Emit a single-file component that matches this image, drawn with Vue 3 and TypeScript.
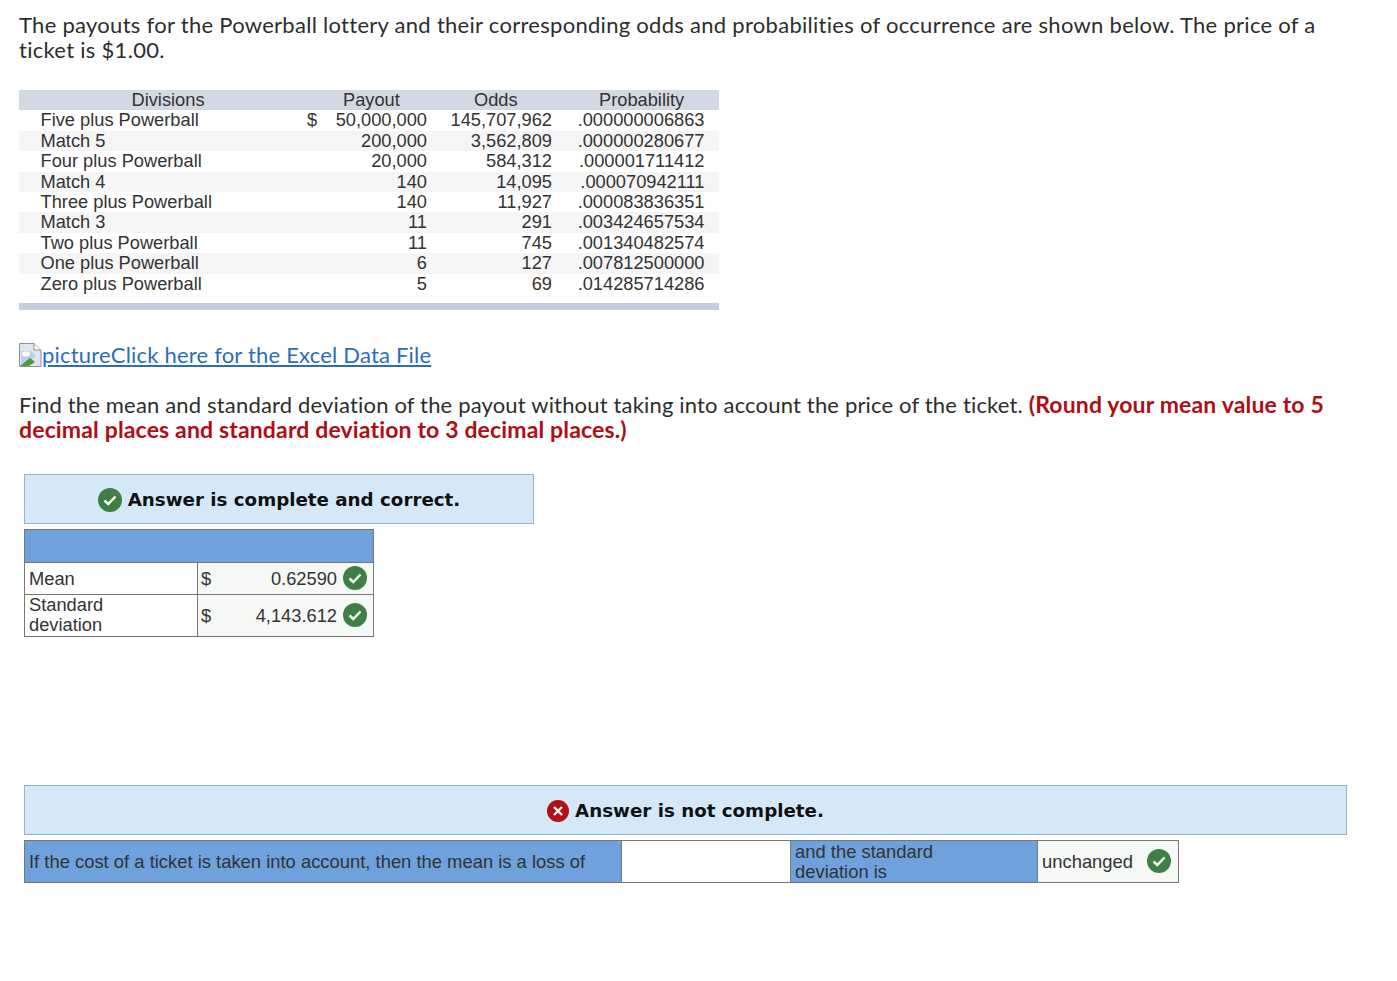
<script setup lang="ts">
interface Row { name: string; dollar?: string; payout: string; odds: string; prob: string }
const rows: Row[] = [
  { name: 'Five plus Powerball', dollar: '$', payout: '50,000,000', odds: '145,707,962', prob: '.000000006863' },
  { name: 'Match 5', payout: '200,000', odds: '3,562,809', prob: '.000000280677' },
  { name: 'Four plus Powerball', payout: '20,000', odds: '584,312', prob: '.000001711412' },
  { name: 'Match 4', payout: '140', odds: '14,095', prob: '.000070942111' },
  { name: 'Three plus Powerball', payout: '140', odds: '11,927', prob: '.000083836351' },
  { name: 'Match 3', payout: '11', odds: '291', prob: '.003424657534' },
  { name: 'Two plus Powerball', payout: '11', odds: '745', prob: '.001340482574' },
  { name: 'One plus Powerball', payout: '6', odds: '127', prob: '.007812500000' },
  { name: 'Zero plus Powerball', payout: '5', odds: '69', prob: '.014285714286' },
]
</script>

<template>
  <div class="page">
    <p class="intro">The payouts for the Powerball lottery and their corresponding odds and probabilities of occurrence are shown below. The price of a ticket is $1.00.</p>

    <div class="data">
      <div class="data-row data-head">
        <span class="c-name head-name">Divisions</span>
        <span class="c-dollar"></span>
        <span class="c-payout head-payout">Payout</span>
        <span class="c-odds head-odds">Odds</span>
        <span class="c-prob head-prob">Probability</span>
      </div>
      <div v-for="r in rows" :key="r.name" class="data-row">
        <span class="c-name">{{ r.name }}</span>
        <span class="c-dollar">{{ r.dollar }}</span>
        <span class="c-payout">{{ r.payout }}</span>
        <span class="c-odds">{{ r.odds }}</span>
        <span class="c-prob">{{ r.prob }}</span>
      </div>
      <div class="data-foot"></div>
    </div>

    <p class="link-line">
      <svg class="broken" width="23" height="24" viewBox="0 0 23 24">
        <path d="M.5 .5H15L22 7V23.5H.5Z" fill="#dfe6f2" stroke="#8f8f8f"/>
        <path d="M15 .5V7H22" fill="#fff" stroke="#8f8f8f"/>
        <path d="M2 8H12L17 13L6 21H2Z" fill="#b9cdee"/>
        <ellipse cx="7" cy="11" rx="4" ry="2.4" fill="#fff"/>
        <path d="M1 23L11 15L16 19L10 23Z" fill="#4f9a3c"/>
      </svg><a class="link" href="#">pictureClick here for the Excel Data File</a>
    </p>

    <p class="question">Find the mean and standard deviation of the payout without taking into account the price of the ticket. <b class="hint">(Round your mean value to 5 decimal places and standard deviation to 3 decimal places.)</b></p>

    <div class="banner banner-small">
      <svg width="24" height="24" viewBox="0 0 24 24"><circle cx="12" cy="12" r="12" fill="#3f7f43"/><path d="M6.5 12.5L10.3 16L17.5 8.5" fill="none" stroke="#fff" stroke-width="2.4"/></svg>
      <span>Answer is complete and correct.</span>
    </div>

    <table class="answers">
      <colgroup><col class="col-lbl"><col class="col-cur"><col></colgroup>
      <tbody>
        <tr class="blue-row"><td colspan="3"></td></tr>
        <tr class="r1">
          <td class="lbl">Mean</td>
          <td class="cur">$</td>
          <td class="val"><div class="val-in"><span>0.62590</span><svg width="24" height="24" viewBox="0 0 24 24"><circle cx="12" cy="12" r="12" fill="#3f7f43"/><path d="M6.5 12.5L10.3 16L17.5 8.5" fill="none" stroke="#fff" stroke-width="2.4"/></svg></div></td>
        </tr>
        <tr class="r2">
          <td class="lbl">Standard<br>deviation</td>
          <td class="cur">$</td>
          <td class="val"><div class="val-in"><span>4,143.612</span><svg width="24" height="24" viewBox="0 0 24 24"><circle cx="12" cy="12" r="12" fill="#3f7f43"/><path d="M6.5 12.5L10.3 16L17.5 8.5" fill="none" stroke="#fff" stroke-width="2.4"/></svg></div></td>
        </tr>
      </tbody>
    </table>

    <div class="banner banner-wide">
      <svg width="22" height="22" viewBox="0 0 22 22"><circle cx="11" cy="11" r="11" fill="#b01116"/><path d="M7 7L15 15M15 7L7 15" fill="none" stroke="#fff" stroke-width="2.4"/></svg>
      <span>Answer is not complete.</span>
    </div>

    <table class="final">
      <tbody>
        <tr>
          <td class="f-a">If the cost of a ticket is taken into account, then the mean is a loss of</td>
          <td class="f-b"></td>
          <td class="f-c">and the standard<br>deviation is</td>
          <td class="f-d"><div class="val-in f-in"><span>unchanged</span><svg width="24" height="24" viewBox="0 0 24 24"><circle cx="12" cy="12" r="12" fill="#3f7f43"/><path d="M6.5 12.5L10.3 16L17.5 8.5" fill="none" stroke="#fff" stroke-width="2.4"/></svg></div></td>
        </tr>
      </tbody>
    </table>
  </div>
</template>

<style scoped>
.page { width: 1397px; height: 981px; overflow: hidden; background: #fff; padding: 12px 0 0 19px; box-sizing: border-box; color: #2d2d2d; font-family: "Lato", "Liberation Sans", sans-serif; font-size: 22px; line-height: 25px; letter-spacing: .2px; }
p { margin: 0; width: 1312px; }
.intro { height: 50px; letter-spacing: .285px; }
.data { width: 700px; margin-top: 28px; font-family: "Liberation Sans", sans-serif; font-size: 18.25px; line-height: 20.4px; letter-spacing: 0; color: #333; }
.data-row { display: flex; height: 20.4px; white-space: nowrap; }
.data-row:nth-child(odd) { background: #f5f5f5; }
.data-row.data-head { background: #d3d8e5; }
.c-name { width: 280px; padding-left: 21.5px; box-sizing: border-box; }
.head-name { padding-left: 112.5px; }
.c-dollar { width: 20px; margin-left: 8px; }
.c-payout { width: 100px; text-align: right; }
.c-odds { width: 125px; text-align: right; }
.c-prob { width: 152.5px; text-align: right; }
.head-payout { text-align: left; padding-left: 16px; box-sizing: border-box; }
.head-odds { text-align: left; padding-left: 47px; box-sizing: border-box; }
.head-prob { text-align: left; padding-left: 47px; box-sizing: border-box; }
.data-foot { height: 7px; margin-top: 9px; background: #c5cede; }
.link-line { margin-top: 32px; height: 25px; display: flex; align-items: flex-end; }
.broken { flex: none; }
.link { color: #2a6ebb; text-decoration: underline; }
.question { margin-top: 25px; letter-spacing: .17px; }
.hint { color: #b00d14; font-weight: 700; font-size: 23px; letter-spacing: .15px; }
.banner { display: flex; justify-content: center; align-items: center; gap: 6px; box-sizing: border-box; height: 50px; padding-top: 2px; margin-left: 5px; background: #d4e8f8; border: 1px solid #8db4dc; font-family: "DejaVu Sans", sans-serif; font-weight: 700; font-size: 18.25px; letter-spacing: 0; color: #111; }
.banner-small { width: 510px; margin-top: 32px; }
.banner-wide { width: 1323px; margin-top: 148px; }
table { border-collapse: collapse; margin-left: 5px; font-family: "Liberation Sans", sans-serif; font-size: 18.3px; line-height: 20px; letter-spacing: 0; color: #333; }
td { border: 1px solid #777; padding: 0 4px; }
.answers { margin-top: 5px; width: 350px; table-layout: fixed; }
.col-lbl { width: 173px; }
.col-cur { width: 20px; }
.blue-row td { height: 32px; background: #6fa1dc; }
.r1 td { height: 30px; padding-top: 1px; }
.r2 td { height: 41px; }
.r2 .cur { padding-top: 2px; height: 39px; }
.r2 .val span { padding-top: 2px; }
.cur { background: #f5f8f5; border-right: 0; padding-left: 3px; padding-right: 0; }
.val { background: #f5f8f5; border-left: 0; padding-right: 6px; }
.val-in { display: flex; justify-content: flex-end; align-items: center; gap: 6px; }
.val-in svg { flex: none; }
.r1 .val-in svg { margin-top: -1px; }
.final { margin-top: 5px; table-layout: fixed; width: 1155px; font-size: 18.4px; }
.final td { height: 41px; }
.final .f-a { width: 588px; background: #6fa1dc; padding-top: 2px; height: 39px; }
.f-b { width: 160px; background: #fff; }
.final .f-c { width: 238px; background: #6fa1dc; padding-top: 1px; height: 40px; }
.f-d { background: #f5f8f5; padding-right: 7px; }
.f-in { justify-content: space-between; }
.f-in span { padding-top: 2px; }
</style>

<style>
body { margin: 0; }
</style>
